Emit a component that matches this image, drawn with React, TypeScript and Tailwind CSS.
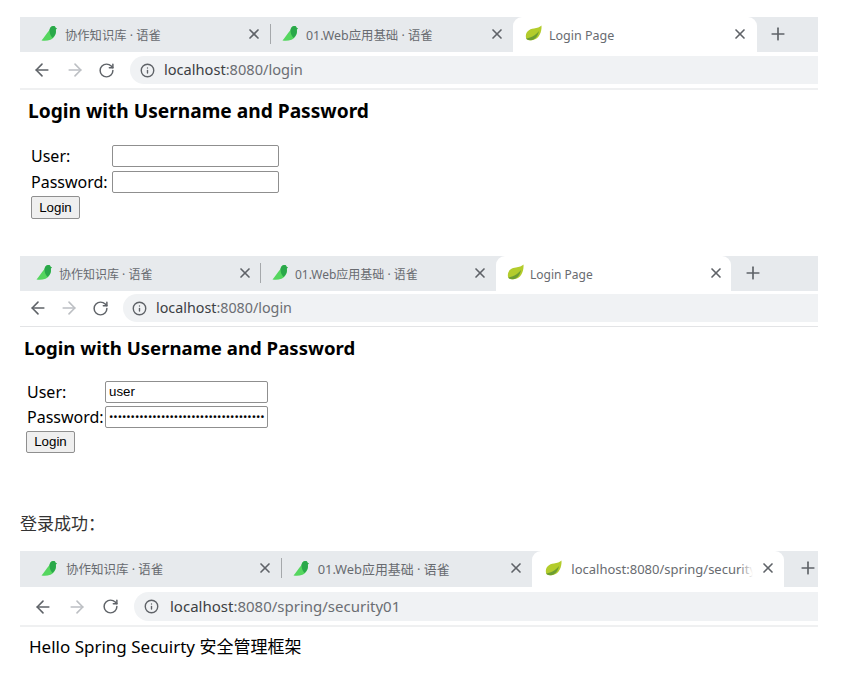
import { ArrowLeft, ArrowRight, Info, Plus, RotateCw, X } from "lucide-react";

const sans = "font-['Noto_Sans','Noto_Sans_CJK_SC',sans-serif]";

function BirdIcon() {
  return (
    <svg width="17" height="17" viewBox="0 0 17 17" className="shrink-0">
      <path d="M0.5 15.5 C3 13 5 9 8.5 5 C9 2 11 0.5 13 1 C14 1.3 14.5 2 14.6 3 L16 3.6 L14.8 4.6 C15.5 9 13.5 13 9.5 14.8 C6.5 16 3 16 0.5 15.5Z" fill="#55d65f" />
      <path d="M8.5 5 C9 2 11 0.5 13 1 C14 1.3 14.5 2 14.6 3 L16 3.6 L14.8 4.6 C15.5 8 14 11 11.5 13 C9.5 11 8.5 8 8.5 5Z" fill="#2aa84a" />
    </svg>
  );
}

function LeafIcon() {
  return (
    <svg width="17" height="17" viewBox="0 0 17 17" className="shrink-0">
      <path d="M1 13 C0 7 4 4 9 3.5 C12 3 15 2 16.5 0.5 C17 7 14 14 8 15 C5 15.5 2 15.5 1 13Z" fill="#b3cc2c" />
      <path d="M1 13.5 C5 13 10 11 14 6 C13 11 10 14.5 7 15 C4.5 15.5 2 15 1 13.5Z" fill="#6d9e32" />
    </svg>
  );
}

function CloseIcon({ className }: { className: string }) {
  return <X size={16} strokeWidth={2.5} className={`shrink-0 text-[#5f6368] ${className}`} />;
}

function TabLabel({ text, sizeClass }: { text: string; sizeClass: string }) {
  return <span className={`${sans} whitespace-nowrap text-[#686b70] ${sizeClass}`}>{text}</span>;
}

function Toolbar({
  url,
  rest,
  rowClass,
  forwardClass,
  reloadClass,
  boxClass,
  textClass,
}: {
  url: string;
  rest: string;
  rowClass: string;
  forwardClass: string;
  reloadClass: string;
  boxClass: string;
  textClass: string;
}) {
  return (
    <div className={`flex items-center ${rowClass}`}>
      <ArrowLeft size={20} strokeWidth={1.9} className="shrink-0 text-[#5f6368]" />
      <ArrowRight size={20} strokeWidth={1.9} className={`shrink-0 text-[#bcbfc3] ${forwardClass}`} />
      <RotateCw size={17} strokeWidth={2.1} className={`shrink-0 text-[#5f6368] ${reloadClass}`} />
      <div className={`flex flex-1 items-center self-stretch rounded-l-full bg-[#f0f2f4] ${boxClass}`}>
        <Info size={15} strokeWidth={2.2} className="shrink-0 text-[#5f6368]" />
        <span className={`${sans} ${textClass} whitespace-nowrap text-[#3c4043]`}>
          {url}
          <span className="text-[#6b6e73]">{rest}</span>
        </span>
      </div>
    </div>
  );
}

function LoginForm({
  value,
  dots,
  headingClass,
  tableClass,
  gridClass,
  inputClass,
  buttonClass,
}: {
  value: string;
  dots: string;
  headingClass: string;
  tableClass: string;
  gridClass: string;
  inputClass: string;
  buttonClass: string;
}) {
  return (
    <div>
      <h2 className={`${sans} font-bold text-black ${headingClass}`}>Login with Username and Password</h2>
      <div className={`${sans} text-black ${tableClass}`}>
        <div className={`grid justify-start items-center text-[16px] leading-[22px] ${gridClass}`}>
          <span>User:</span>
          <input
            readOnly
            value={value}
            className={`h-[22px] rounded-[2px] border border-[#8f8f8f] px-[3px] font-['Liberation_Sans',sans-serif] text-[13.3px] text-black ${inputClass}`}
          />
          <span className="whitespace-nowrap">Password:</span>
          <div className={`h-[22px] overflow-hidden whitespace-nowrap rounded-[2px] border border-[#8f8f8f] px-[3px] text-[11.5px] leading-[20px] ${inputClass}`}>
            {dots}
          </div>
        </div>
        <button
          type="button"
          className={`block rounded-[2px] border border-[#8f8f8f] bg-[#efefef] font-['Liberation_Sans',sans-serif] text-[13.3px] text-black ${buttonClass}`}
        >
          Login
        </button>
      </div>
    </div>
  );
}

export default function App() {
  return (
    <div className="h-[697px] w-[866px] overflow-hidden bg-white pl-[20px] pt-[17px]">
      <div className="w-[798px]">
        {/* first window */}
        <div className="flex h-[35px] items-stretch bg-[#e7eaed]">
          <div className="flex w-[251px] items-center pb-[2px] pl-[21px]">
            <BirdIcon />
            <div className="ml-[7px]"><TabLabel text="协作知识库 · 语雀" sizeClass="text-[12.3px]" /></div>
            <CloseIcon className="ml-auto mr-[8px]" />
            <div className="h-[20px] w-px bg-[#a5a8ab]" />
          </div>
          <div className="flex w-[242px] items-center pb-[2px] pl-[11px]">
            <BirdIcon />
            <div className="ml-[7px]"><TabLabel text="01.Web应用基础 · 语雀" sizeClass="text-[12.4px]" /></div>
            <CloseIcon className="ml-auto mr-[8px]" />
          </div>
          <div className="flex w-[244px] items-center rounded-t-[9px] bg-white pb-[2px] pl-[12px]">
            <LeafIcon />
            <div className="ml-[7px]"><TabLabel text="Login Page" sizeClass="text-[12.5px]" /></div>
            <CloseIcon className="ml-auto mr-[9px]" />
          </div>
          <div className="flex items-center pb-[2px] pl-[11px]">
            <Plus size={20} strokeWidth={2} className="text-[#5f6368]" />
          </div>
        </div>
        <Toolbar
          url="localhost"
          rest=":8080/login"
          rowClass="mt-[4px] h-[28px] pl-[12px]"
          forwardClass="ml-[13px]"
          reloadClass="ml-[13px]"
          boxClass="ml-[15px] pl-[10px]"
          textClass="ml-[9px] text-[14.6px]"
        />
        <div className="mt-[4px] h-[2px] bg-[#eff0f1]" />
        <div className="pl-[8px]">
          <LoginForm
            value=""
            dots=""
            headingClass="mt-[7px] text-[19.15px] leading-[28px]"
            tableClass="mt-[20px] pl-[3px]"
            gridClass="grid-cols-[81px_auto] gap-y-[4px]"
            inputClass="w-[167px]"
            buttonClass="mt-[3px] h-[23px] w-[49px]"
          />
        </div>

        {/* second window */}
        <div className="mt-[37px] flex h-[35px] items-stretch bg-[#e7eaed]">
          <div className="flex w-[241px] items-center pb-[2px] pl-[16px]">
            <BirdIcon />
            <div className="ml-[6px]"><TabLabel text="协作知识库 · 语雀" sizeClass="text-[12px]" /></div>
            <CloseIcon className="ml-auto mr-[7px]" />
            <div className="h-[20px] w-px bg-[#a5a8ab]" />
          </div>
          <div className="flex w-[235px] items-center pb-[2px] pl-[11px]">
            <BirdIcon />
            <div className="ml-[6px]"><TabLabel text="01.Web应用基础 · 语雀" sizeClass="text-[12px]" /></div>
            <CloseIcon className="ml-auto mr-[8px]" />
          </div>
          <div className="flex w-[235px] items-center rounded-t-[9px] bg-white pb-[2px] pl-[11px]">
            <LeafIcon />
            <div className="ml-[6px]"><TabLabel text="Login Page" sizeClass="text-[12px]" /></div>
            <CloseIcon className="ml-auto mr-[7px]" />
          </div>
          <div className="flex items-center pb-[2px] pl-[12px]">
            <Plus size={20} strokeWidth={2} className="text-[#5f6368]" />
          </div>
        </div>
        <Toolbar
          url="localhost"
          rest=":8080/login"
          rowClass="mt-[3px] h-[28px] pl-[8px]"
          forwardClass="ml-[11px]"
          reloadClass="ml-[13px]"
          boxClass="ml-[14px] pl-[9px]"
          textClass="ml-[9px] text-[14.3px]"
        />
        <div className="mt-[4px] h-px bg-[#e3e4e6]" />
        <div className="pl-[4px]">
          <LoginForm
            value="user"
            dots="••••••••••••••••••••••••••••••••••••"
            headingClass="mt-[7px] text-[18.6px] leading-[28px]"
            tableClass="mt-[19px] pl-[3px]"
            gridClass="grid-cols-[78px_auto] gap-y-[3px]"
            inputClass="w-[163px]"
            buttonClass="mt-[3px] -ml-px h-[22px] w-[49px]"
          />
        </div>

        <p className={`${sans} mt-[59px] text-[17px] leading-[24px] text-[#333333]`}>登录成功：</p>

        {/* third window */}
        <div className="mt-[15px] flex h-[36px] items-stretch bg-[#e7eaed]">
          <div className="flex w-[262px] items-center pb-[2px] pl-[21px]">
            <BirdIcon />
            <div className="ml-[8px]"><TabLabel text="协作知识库 · 语雀" sizeClass="text-[12.5px]" /></div>
            <CloseIcon className="ml-auto mr-[8px]" />
            <div className="h-[20px] w-px bg-[#a5a8ab]" />
          </div>
          <div className="flex w-[251px] items-center pb-[2px] pl-[11px]">
            <BirdIcon />
            <div className="ml-[8px]"><TabLabel text="01.Web应用基础 · 语雀" sizeClass="text-[12.9px]" /></div>
            <CloseIcon className="ml-auto mr-[8px]" />
          </div>
          <div className="flex w-[252px] items-center rounded-t-[9px] bg-white pb-[2px] pl-[13px]">
            <LeafIcon />
            <div className="relative ml-[9px] w-[182px] overflow-hidden">
              <TabLabel text="localhost:8080/spring/security01" sizeClass="text-[13px]" />
              <div className="absolute inset-y-0 right-0 w-[14px] bg-gradient-to-r from-transparent to-white" />
            </div>
            <CloseIcon className="ml-auto mr-[8px]" />
          </div>
          <div className="flex items-center pb-[2px] pl-[14px]">
            <Plus size={20} strokeWidth={2} className="text-[#5f6368]" />
          </div>
        </div>
        <Toolbar
          url="localhost"
          rest=":8080/spring/security01"
          rowClass="mt-[5px] h-[29px] pl-[13px]"
          forwardClass="ml-[14px]"
          reloadClass="ml-[15px]"
          boxClass="ml-[15px] pl-[10px]"
          textClass="ml-[11px] text-[15px]"
        />
        <div className="mt-[4px] h-[2px] bg-[#eff0f1]" />
        <p className={`${sans} mt-[8px] pl-[9px] text-[17px] leading-[24px] text-black`}>Hello Spring Secuirty 安全管理框架</p>
      </div>
    </div>
  );
}
